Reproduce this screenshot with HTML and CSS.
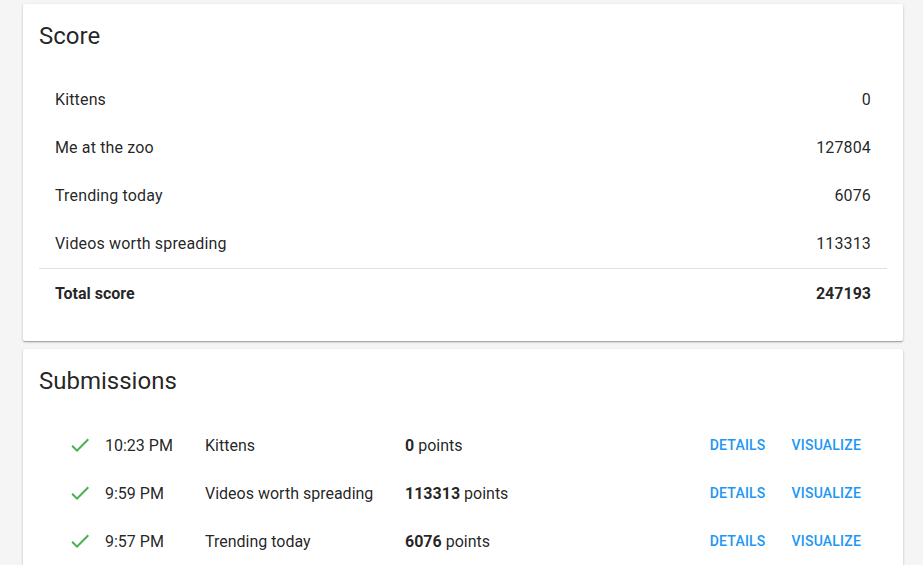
FILE: index.html
```html
<!DOCTYPE html>
<html>
<head>
<meta charset="utf-8">
<link rel="stylesheet" href="styles.css">
</head>
<body>
<div class="page">
  <section class="card">
    <h2 class="card-title">Score</h2>
    <ul class="score-list">
      <li class="score-row"><span>Kittens</span><span>0</span></li>
      <li class="score-row"><span>Me at the zoo</span><span>127804</span></li>
      <li class="score-row"><span>Trending today</span><span>6076</span></li>
      <li class="score-row"><span>Videos worth spreading</span><span>113313</span></li>
      <li class="divider"></li>
      <li class="score-row total"><span>Total score</span><span>247193</span></li>
    </ul>
  </section>
  <section class="card">
    <h2 class="card-title">Submissions</h2>
    <ul class="sub-list">
      <li class="sub-row">
        <svg class="check" viewBox="0 0 24 24"><path d="M9 16.17L4.83 12l-1.42 1.41L9 19 21 7l-1.41-1.41z"/></svg>
        <span>10:23 PM</span>
        <span>Kittens</span>
        <span><b>0</b> points</span>
        <span class="actions"><a class="btn">Details</a><a class="btn">Visualize</a></span>
      </li>
      <li class="sub-row">
        <svg class="check" viewBox="0 0 24 24"><path d="M9 16.17L4.83 12l-1.42 1.41L9 19 21 7l-1.41-1.41z"/></svg>
        <span>9:59 PM</span>
        <span>Videos worth spreading</span>
        <span><b>113313</b> points</span>
        <span class="actions"><a class="btn">Details</a><a class="btn">Visualize</a></span>
      </li>
      <li class="sub-row">
        <svg class="check" viewBox="0 0 24 24"><path d="M9 16.17L4.83 12l-1.42 1.41L9 19 21 7l-1.41-1.41z"/></svg>
        <span>9:57 PM</span>
        <span>Trending today</span>
        <span><b>6076</b> points</span>
        <span class="actions"><a class="btn">Details</a><a class="btn">Visualize</a></span>
      </li>
    </ul>
  </section>
</div>
</body>
</html>
```
FILE: styles.css
```css
html, body {
  margin: 0;
  padding: 0;
  background: #f5f5f5;
  font-family: Roboto, "Liberation Sans", sans-serif;
  color: rgba(0, 0, 0, 0.87);
  overflow: hidden;
}
.page {
  padding: 4px 20px 0 23px;
  display: flex;
  flex-direction: column;
  gap: 8px;
}
.card {
  width: 880px;
  box-sizing: border-box;
  background: #fff;
  border-radius: 2px;
  box-shadow: 0 1px 3px rgba(0,0,0,0.2), 0 1px 1px rgba(0,0,0,0.14), 0 2px 1px -1px rgba(0,0,0,0.12);
  padding: 16px 16px 24px;
}
.card-title {
  margin: 0;
  font-size: 24px;
  font-weight: 400;
  line-height: 32px;
}
.score-list, .sub-list {
  list-style: none;
  margin: 23px 0 0;
  padding: 0;
}
.score-row {
  display: flex;
  justify-content: space-between;
  align-items: center;
  height: 48px;
  padding: 0 16px;
  font-size: 16px;
  letter-spacing: 0.15px;
}
.score-row.total {
  font-weight: 700;
  letter-spacing: 0;
}
.divider {
  height: 1px;
  margin-top: 1px;
  background: #e0e0e0;
}
.sub-list {
  margin-top: 24px;
}
.sub-row {
  display: grid;
  grid-template-columns: 37px 100px 200px 1fr auto;
  align-items: center;
  height: 48px;
  padding: 0 18px 0 29px;
  font-size: 16px;
}
.sub-row b {
  font-weight: 700;
}
.check {
  width: 24px;
  height: 24px;
  fill: #4caf50;
}
.actions {
  display: flex;
  gap: 10px;
}
.btn {
  padding: 0 8px;
  font-size: 14px;
  font-weight: 500;
  text-transform: uppercase;
  letter-spacing: 0.2px;
  color: #2196f3;
}
```
